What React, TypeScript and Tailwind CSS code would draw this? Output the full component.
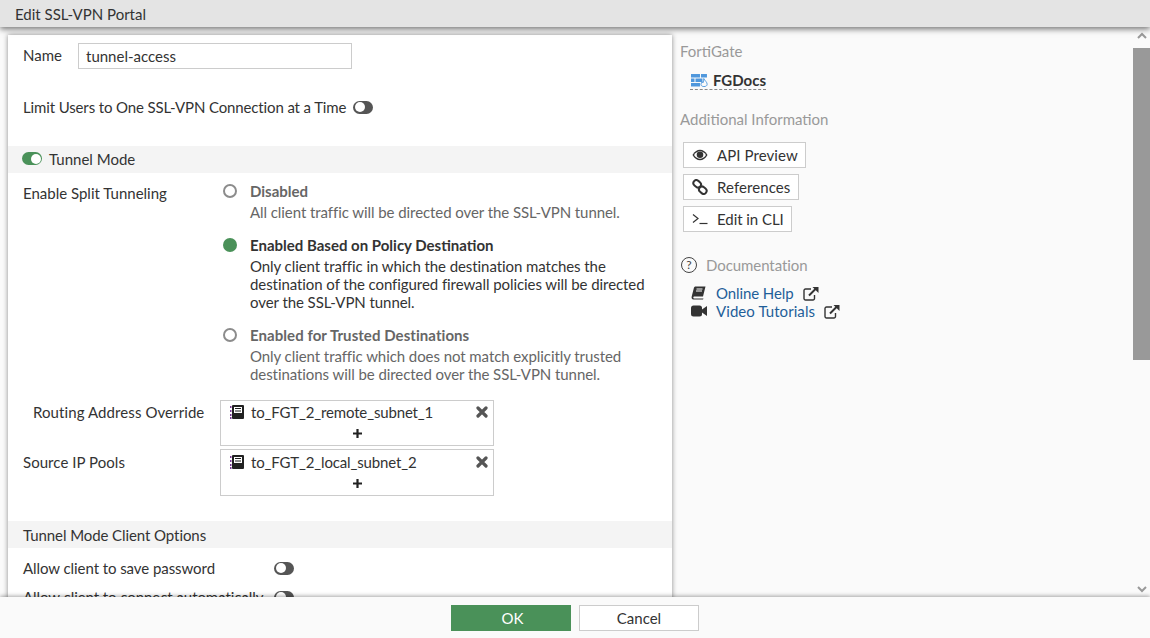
import * as React from "react";

function Toggle({ on = false }: { on?: boolean }) {
  return (
    <span
      className={[
        "flex h-[13px] w-5 shrink-0 items-center rounded-full px-[1.5px]",
        on ? "justify-end bg-[#4a9159]" : "justify-start bg-[#555555]",
      ].join(" ")}
    >
      <span className="h-[10px] w-[10px] rounded-full bg-white" />
    </span>
  );
}

function Radio({ on = false }: { on?: boolean }) {
  return (
    <span
      className={[
        "mt-[2px] mr-[13px] ml-[3px] h-[14px] w-[14px] shrink-0 rounded-full",
        on ? "bg-[#4a9159]" : "border-2 border-[#8c8c8c] bg-white",
      ].join(" ")}
    />
  );
}

function AddressIcon() {
  return (
    <svg width="14" height="14" viewBox="0 0 14 14" className="shrink-0">
      <rect x="2" y="0" width="12" height="14" rx="1" fill="#222222" />
      <rect x="4" y="2" width="8" height="6" fill="#ffffff" />
      <rect x="5" y="3" width="6" height="1" fill="#222222" />
      <rect x="5" y="5.500" width="6" height="1" fill="#222222" />
      <rect x="0" y="1" width="1.500" height="2" fill="#7b3f98" />
      <rect x="0" y="5" width="1.500" height="2" fill="#7b3f98" />
      <rect x="0" y="9" width="1.500" height="2" fill="#7b3f98" />
      <rect x="0" y="12" width="1.500" height="2" fill="#7b3f98" />
    </svg>
  );
}

function AddressBox({ name, second }: { name: string; second?: boolean }) {
  return (
    <div className="w-[274px] border border-[#cccccc] bg-white">
      <div
        className={[
          "flex items-center pr-[5px] pl-[9px] text-[15px] tracking-[-0.15px] text-[#333333]",
          second ? "h-[23px] pt-[1px]" : "h-[22px]",
        ].join(" ")}
      >
        <AddressIcon />
        <span className="ml-[7px] flex-1">{name}</span>
        <svg width="12" height="12" viewBox="0 0 12 12" stroke="#555555" strokeWidth="3.200" strokeLinecap="round">
          <path d="M2 2 L10 10 M10 2 L2 10" />
        </svg>
      </div>
      <div className={["flex h-[22px] items-center justify-center", second ? "pb-[1px]" : "pb-[2px]"].join(" ")}>
        <svg width="9" height="9" viewBox="0 0 9 9" stroke="#222222" strokeWidth="2.200">
          <path d="M4.500 0 V9 M0 4.500 H9" />
        </svg>
      </div>
    </div>
  );
}

function RadioOption({
  on,
  title,
  titleTracking,
  lines,
  className,
}: {
  on?: boolean;
  title: string;
  titleTracking?: string;
  lines: string[];
  className?: string;
}) {
  const color = on ? "text-[#333333]" : "text-[#666666]";
  return (
    <div className={["flex", className ?? ""].join(" ")}>
      <Radio on={on} />
      <div>
        <div className={["h-[18px] font-bold", color, titleTracking ?? ""].join(" ")}>{title}</div>
        <div className={["mt-[3px] tracking-[-0.07px]", color].join(" ")}>
          {lines.map((l) => (
            <div key={l} className="h-[18px] whitespace-nowrap">
              {l}
            </div>
          ))}
        </div>
      </div>
    </div>
  );
}

function ActionButton({
  icon,
  label,
  width,
  tracking,
}: {
  icon: React.ReactNode;
  label: string;
  width: string;
  tracking: string;
}) {
  return (
    <div className={["flex h-[26px] items-center border border-[#cccccc] bg-white pl-[8px] text-[#333333]", width].join(" ")}>
      <span className="flex w-[16px] justify-center">{icon}</span>
      <span className={["ml-[9px]", tracking].join(" ")}>{label}</span>
    </div>
  );
}

function EyeIcon() {
  return (
    <svg width="17" height="12" viewBox="0 0 17 12">
      <path d="M0.500 6 C3 2 5.500 0.500 8.500 0.500 C11.500 0.500 14 2 16.500 6 C14 10 11.500 11.500 8.500 11.500 C5.500 11.500 3 10 0.500 6 Z" fill="#333333" />
      <path d="M2.200 6 C4 3.200 6 2 8.500 2 C11 2 13 3.200 14.800 6 C13 8.800 11 10 8.500 10 C6 10 4 8.800 2.200 6 Z" fill="#ffffff" />
      <circle cx="8.500" cy="5.700" r="3.500" fill="#333333" />
    </svg>
  );
}

function LinkIcon() {
  return (
    <svg width="16" height="16" viewBox="0 0 16 16" fill="none" stroke="#333333" strokeWidth="2">
      <rect x="1.200" y="1.800" width="8" height="6" rx="3" transform="rotate(40 5.200 4.800)" />
      <rect x="6.800" y="8.200" width="8" height="6" rx="3" transform="rotate(40 10.800 11.200)" />
    </svg>
  );
}

function TerminalIcon() {
  return (
    <svg width="16" height="12" viewBox="0 0 16 12" fill="none" stroke="#333333" strokeWidth="1.200">
      <path d="M1 1.500 L6 5.500 L1 9.500" />
      <path d="M7.500 10.500 H15.500" />
    </svg>
  );
}

function BookIcon() {
  return (
    <svg width="15" height="14" viewBox="0 0 15 14">
      <path
        d="M4 0.500 H14.500 L12 10.500 H3.200 C2 10.500 2 12.500 3.200 12.500 H12.500 L12 13.500 H2.500 C0.800 13.500 0.300 12 0.700 10.500 L3 1.500 Z"
        fill="#333333"
      />
      <path d="M5.500 3 H11.500 M5 5 H11" stroke="#ffffff" strokeWidth="1" />
    </svg>
  );
}

function VideoIcon() {
  return (
    <svg width="16" height="12" viewBox="0 0 16 12" fill="#333333">
      <rect x="0" y="0.500" width="11" height="11" rx="2.500" />
      <path d="M11 4.500 L16 1 V11 L11 7.500 Z" />
    </svg>
  );
}

function ExternalIcon() {
  return (
    <svg width="16" height="15" viewBox="0 0 16 15" fill="none" stroke="#333333">
      <path d="M8 3 H2.500 A1.500 1.500 0 0 0 1 4.500 V12.500 A1.500 1.500 0 0 0 2.500 14 H10 A1.500 1.500 0 0 0 11.500 12.500 V9" strokeWidth="1.400" />
      <path d="M6 9.500 L13 2.500" strokeWidth="2" />
      <path d="M9.500 1 H15.500 V7 Z" fill="#333333" stroke="none" />
    </svg>
  );
}

function FirewallIcon() {
  return (
    <svg width="17" height="13" viewBox="0 0 17 13">
      <rect x="0" y="0" width="9" height="3.500" fill="#4f97dc" />
      <rect x="10" y="0" width="6" height="3.500" fill="#4f97dc" />
      <rect x="0" y="4.500" width="3.500" height="3.500" fill="#4f97dc" />
      <rect x="4.500" y="4.500" width="7" height="3.500" fill="#4f97dc" />
      <rect x="0" y="9" width="9" height="3.500" fill="#4f97dc" />
      <path
        d="M12.800 4.500 C14 7 16.200 8 16.200 10.300 C16.200 11.800 14.800 12.600 13 12.600 C11.200 12.600 10 11.800 10 10.300 C10 9.200 10.700 8.500 11.200 7.700 C11.500 8.100 11.700 8.500 11.900 9 C12.500 7.800 13 6.200 12.800 4.500 Z"
        fill="#fafafa"
        stroke="#5a9fe0"
        strokeWidth="1"
      />
    </svg>
  );
}

export default function App() {
  return (
    <div
      className="flex h-[638px] w-[1150px] flex-col overflow-hidden bg-[#fafafa] text-[15px] leading-[18px] text-[#333333]"
      style={{ fontFamily: "Lato, 'Noto Sans', sans-serif" }}
    >
      <div className="relative z-10 flex h-[27px] shrink-0 items-center bg-[#e4e4e4] pl-[15px] text-[#333333] shadow-[0_2px_6px_rgba(0,0,0,0.55)]">
        Edit SSL-VPN Portal
      </div>

      <div className="flex min-h-0 flex-1 overflow-hidden">
        {/* form panel */}
        <div className="mt-[8px] ml-[8px] h-[700px] w-[664px] shrink-0 bg-white shadow-[0_0_5px_rgba(0,0,0,0.45)]">
          <div className="mt-[8px] flex h-[26px] items-center px-[15px]">
            <span className="w-[55px] -translate-y-[1px]">Name</span>
            <div className="flex h-[26px] w-[274px] items-center border border-[#cccccc] pl-[7px] text-[#333333]">
              tunnel-access
            </div>
          </div>

          <div className="mt-[28px] flex h-[20px] items-center px-[15px]">
            <span className="tracking-[-0.13px]">Limit Users to One SSL-VPN Connection at a Time</span>
            <span className="ml-[7px]">
              <Toggle />
            </span>
          </div>

          <div className="mt-[29px] flex h-[27px] items-center gap-[7px] bg-[#f4f4f4] px-[14px] pb-[2px]">
            <Toggle on />
            <span>Tunnel Mode</span>
          </div>

          <div className="mt-[9px] flex pl-[15px]">
            <div className="w-[197px] pt-[2px]">Enable Split Tunneling</div>
            <div>
              <RadioOption
                title="Disabled"
                lines={["All client traffic will be directed over the SSL-VPN tunnel."]}
              />
              <RadioOption
                on
                className="mt-[15px]"
                title="Enabled Based on Policy Destination"
                lines={[
                  "Only client traffic in which the destination matches the",
                  "destination of the configured firewall policies will be directed",
                  "over the SSL-VPN tunnel.",
                ]}
              />
              <RadioOption
                className="mt-[15px]"
                title="Enabled for Trusted Destinations"
                titleTracking="tracking-[0.06px]"
                lines={[
                  "Only client traffic which does not match explicitly trusted",
                  "destinations will be directed over the SSL-VPN tunnel.",
                ]}
              />
            </div>
          </div>

          <div className="mt-[17px] flex pl-[15px]">
            <div className="w-[197px] pt-[3px] pl-[10px] tracking-[0.09px]">Routing Address Override</div>
            <AddressBox name="to_FGT_2_remote_subnet_1" />
          </div>
          <div className="mt-[3px] flex pl-[15px]">
            <div className="w-[197px] pt-[4px] tracking-[0.05px]">Source IP Pools</div>
            <AddressBox name="to_FGT_2_local_subnet_2" second />
          </div>

          <div className="mt-[25px] flex h-[27px] items-center bg-[#f4f4f4] px-[15px] tracking-[-0.08px]">
            Tunnel Mode Client Options
          </div>

          <div className="mt-[11px] flex h-[18px] items-center px-[15px]">
            <span className="w-[251px] tracking-[-0.07px]">Allow client to save password</span>
            <Toggle />
          </div>
          <div className="mt-[11px] flex h-[18px] items-center px-[15px]">
            <span className="w-[251px] tracking-[-0.06px]">Allow client to connect automatically</span>
            <Toggle />
          </div>
        </div>

        {/* side panel */}
        <div className="min-w-0 flex-1 pt-[15px] pl-[8px]">
          <div className="text-[#999999]">FortiGate</div>
          <div className="mt-[11px] ml-[10px] flex h-[19px] w-[76px] items-center border-b border-dashed border-[#888888] pl-[1px]">
            <FirewallIcon />
            <span className="ml-[5px] font-bold text-[#333333]">FGDocs</span>
          </div>
          <div className="mt-[20px] text-[#999999]">Additional Information</div>
          <div className="mt-[14px] ml-[3px] flex flex-col gap-[6px]">
            <ActionButton icon={<EyeIcon />} label="API Preview" width="w-[123px]" tracking="tracking-[0.08px]" />
            <ActionButton icon={<LinkIcon />} label="References" width="w-[116px]" tracking="tracking-[0.08px]" />
            <ActionButton icon={<TerminalIcon />} label="Edit in CLI" width="w-[109px]" tracking="tracking-[-0.05px]" />
          </div>
          <div className="mt-[24px] flex h-[18px] items-center text-[#999999]">
            <span className="ml-[1px] flex h-[16px] w-[16px] items-center justify-center rounded-full border border-[#444444] text-[12px] text-[#444444]">
              ?
            </span>
            <span className="ml-[9px] tracking-[-0.07px]">Documentation</span>
          </div>
          <div className="mt-[10px] ml-[11px]">
            <div className="flex h-[18px] items-center">
              <BookIcon />
              <span className="ml-[10px] tracking-[-0.09px] text-[#1f5f99]">Online Help</span>
              <span className="ml-[9px]">
                <ExternalIcon />
              </span>
            </div>
            <div className="flex h-[18px] items-center">
              <VideoIcon />
              <span className="ml-[9px] tracking-[0.07px] text-[#1f5f99]">Video Tutorials</span>
              <span className="ml-[9px]">
                <ExternalIcon />
              </span>
            </div>
          </div>
        </div>

        {/* scrollbar */}
        <div className="flex w-[17px] shrink-0 flex-col items-center">
          <svg width="10" height="7" viewBox="0 0 10 7" className="mt-[5px] mb-[9px]" fill="none" stroke="#999999" strokeWidth="2">
            <path d="M1 6 L5 2 L9 6" />
          </svg>
          <div className="h-[312px] w-full bg-[#999999]" />
          <svg width="10" height="7" viewBox="0 0 10 7" className="mt-[226px]" fill="none" stroke="#999999" strokeWidth="2">
            <path d="M1 1 L5 5 L9 1" />
          </svg>
        </div>
      </div>

      <div className="relative z-10 flex h-[41px] shrink-0 items-center justify-center gap-[8px] bg-[#fafafa] shadow-[0_-1px_4px_rgba(0,0,0,0.35)]">
        <div className="flex h-[26px] w-[120px] items-center justify-center bg-[#4a9159] pl-[3px] text-white">OK</div>
        <div className="flex h-[26px] w-[120px] items-center justify-center border border-[#cccccc] bg-white text-[#333333]">
          Cancel
        </div>
      </div>
    </div>
  );
}
